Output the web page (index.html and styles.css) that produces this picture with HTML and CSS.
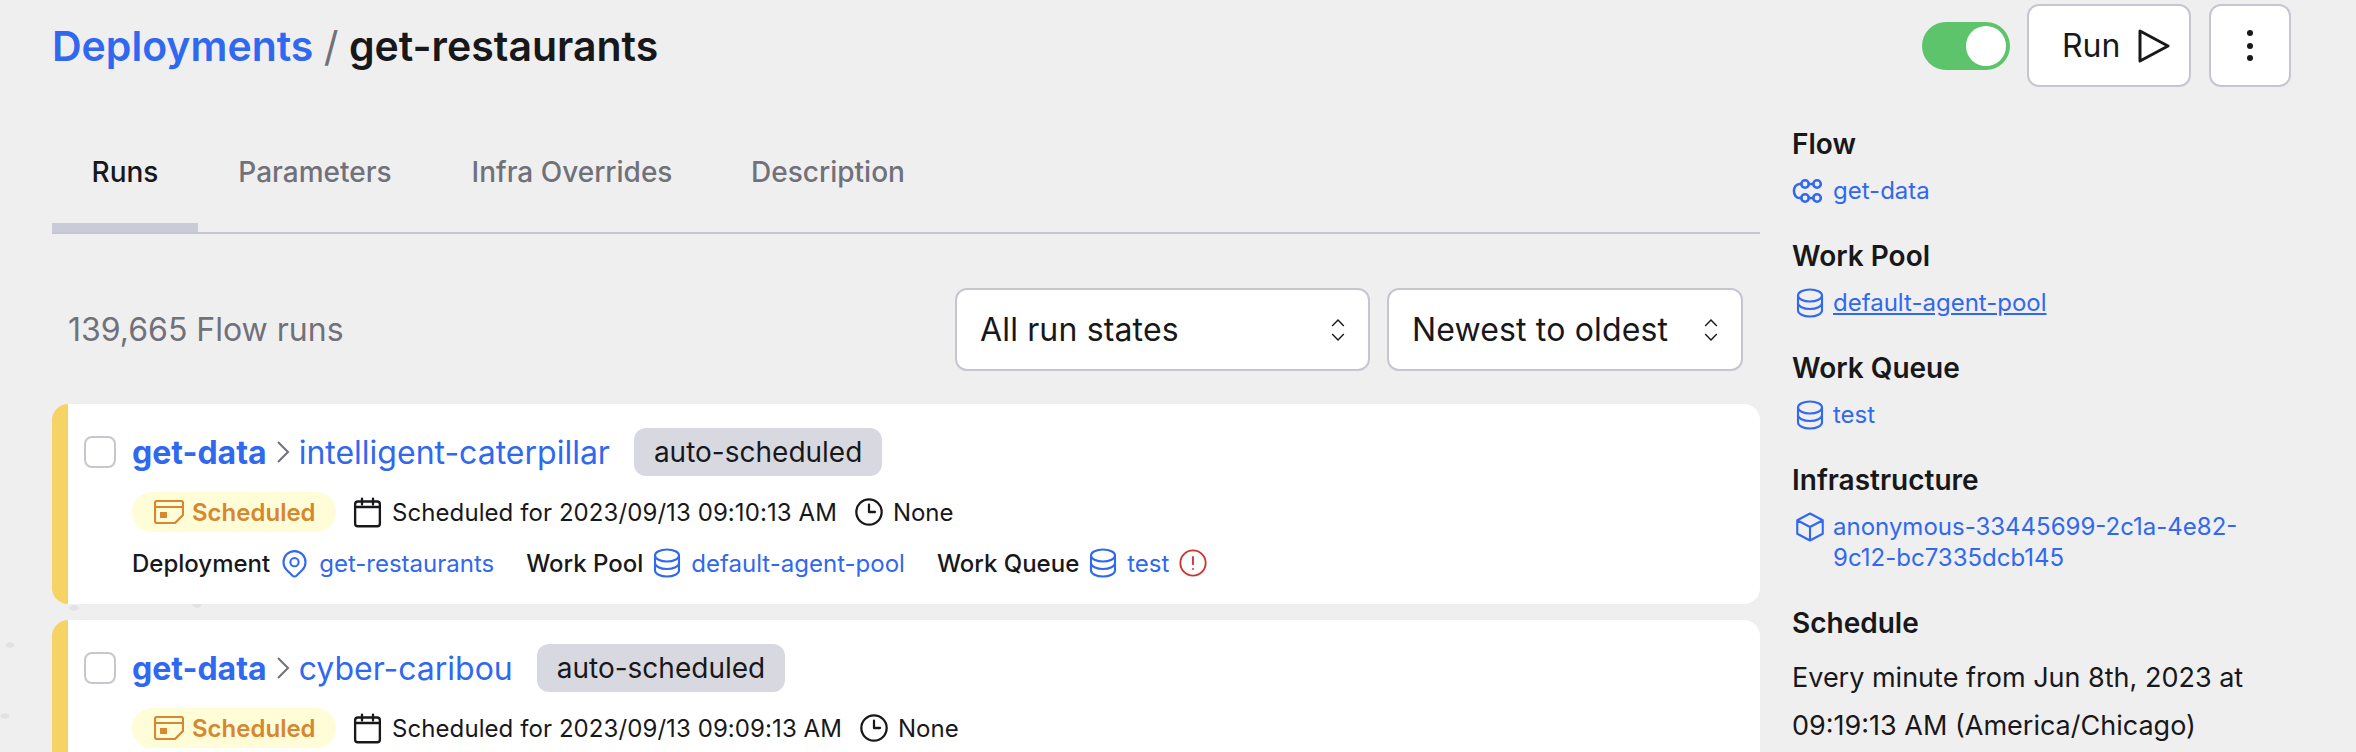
FILE: index.html
```html
<!DOCTYPE html>
<html>
<head>
   <meta charset="utf-8" />
   <title>get-restaurants</title>
   <link rel="stylesheet" href="styles.css">
</head>
<body>
   <svg class="sprite" xmlns="http://www.w3.org/2000/svg">
      <symbol id="i-db" viewBox="0 0 24 24"><path d="M4 7v10c0 2.21 3.582 4 8 4s8-1.79 8-4V7M4 7c0 2.21 3.582 4 8 4s8-1.79 8-4M4 7c0-2.21 3.582-4 8-4s8 1.79 8 4m0 5c0 2.21-3.582 4-8 4s-8-1.79-8-4"/></symbol>
      <symbol id="i-cube" viewBox="0 0 24 24"><path d="M20.500 7.500L12 3 3.500 7.500m17 0L12 12m8.500-4.500v9L12 21m0-9L3.500 7.500M12 12v9M3.500 7.500v9L12 21"/></symbol>
      <symbol id="i-pin" viewBox="0 0 24 24"><path d="M17.657 16.657L13.414 20.9a1.998 1.998 0 01-2.827 0l-4.244-4.243a8 8 0 1111.314 0z"/><path d="M15 11a3 3 0 11-6 0 3 3 0 016 0z"/></symbol>
      <symbol id="i-cal" viewBox="0 0 24 24"><path d="M8 6V2m8 4V2M3 8h18M5 22h14a2 2 0 002-2V6a2 2 0 00-2-2H5a2 2 0 00-2 2v14a2 2 0 002 2z"/></symbol>
      <symbol id="i-clock" viewBox="0 0 24 24"><path d="M12 6.500V12h4.500M21.500 12a9.500 9.500 0 11-19 0 9.500 9.500 0 0119 0z"/></symbol>
      <symbol id="i-alert" viewBox="0 0 24 24"><path d="M12 7.500v5.500m0 3.500h.01M21.500 12a9.500 9.500 0 11-19 0 9.500 9.500 0 0119 0z"/></symbol>
      <symbol id="i-sched" viewBox="0 0 30 24"><path d="M1 3a2 2 0 012-2h24a2 2 0 012 2v12l-8 8H3a2 2 0 01-2-2V3zM1 7h28"/><path class="fill" d="M6 12h7v6H6z"/></symbol>
      <symbol id="i-flow" viewBox="0 0 24 24"><circle cx="8.700" cy="7.300" r="2.500"/><circle cx="16.700" cy="7.300" r="2.500"/><circle cx="8.700" cy="16.700" r="2.500"/><circle cx="16.700" cy="16.700" r="2.500"/><path d="M6.200 7.300H5C2.800 7.300 1.300 9.500 1.300 12s1.500 4.700 3.700 4.700h1.200M11.200 7.300h3M11.200 16.700h3"/></symbol>
   </svg>

   <div class="page">
      <header class="top">
         <h1 class="crumbs"><a href="#">Deployments</a> <span class="slash">/</span> <span class="name">get-restaurants</span></h1>
         <div class="actions">
            <div class="toggle"><span class="knob"></span></div>
            <button class="btn btn-run">Run
               <svg class="play" viewBox="0 0 32 34"><path d="M2 2l28 15-28 15z"/></svg>
            </button>
            <button class="btn btn-more"><span class="dot"></span><span class="dot"></span><span class="dot"></span></button>
         </div>
      </header>

      <div class="columns">
         <main class="main">
            <nav class="tabs">
               <a class="tab active" href="#">Runs</a>
               <a class="tab" href="#">Parameters</a>
               <a class="tab" href="#">Infra Overrides</a>
               <a class="tab" href="#">Description</a>
            </nav>

            <div class="filters">
               <span class="count">139,665 Flow runs</span>
               <div class="select select-state">All run states
                  <svg class="arrows" viewBox="0 0 24 24"><path d="M7 8.500l5-5 5 5m0 7l-5 5-5-5"/></svg>
               </div>
               <div class="select select-sort">Newest to oldest
                  <svg class="arrows" viewBox="0 0 24 24"><path d="M7 8.500l5-5 5 5m0 7l-5 5-5-5"/></svg>
               </div>
            </div>

            <article class="card">
               <div class="row row-title">
                  <span class="check"></span>
                  <a class="flow" href="#">get-data</a>
                  <svg class="chev" viewBox="5 1 14 22"><path d="M7 2l10 10-10 10"/></svg>
                  <a class="run" href="#">intelligent-caterpillar</a>
                  <span class="tag">auto-scheduled</span>
               </div>
               <div class="row row-meta">
                  <span class="badge"><svg class="ic-badge"><use href="#i-sched"/></svg>Scheduled</span>
                  <svg class="ic ic-cal"><use href="#i-cal"/></svg>
                  <span class="when">Scheduled for 2023/09/13 09:10:13 AM</span>
                  <svg class="ic ic-clock"><use href="#i-clock"/></svg>
                  <span>None</span>
               </div>
               <div class="row row-rel">
                  <span class="rel-first">Deployment</span>
                  <svg class="ic ic-pin"><use href="#i-pin"/></svg>
                  <a class="rel-pin" href="#">get-restaurants</a>
                  <span class="rel-label">Work Pool</span>
                  <svg class="ic ic-db"><use href="#i-db"/></svg>
                  <a href="#">default-agent-pool</a>
                  <span class="rel-label">Work Queue</span>
                  <svg class="ic ic-db"><use href="#i-db"/></svg>
                  <a href="#">test</a>
                  <svg class="ic ic-alert"><use href="#i-alert"/></svg>
               </div>
            </article>

            <article class="card">
               <div class="row row-title">
                  <span class="check"></span>
                  <a class="flow" href="#">get-data</a>
                  <svg class="chev" viewBox="5 1 14 22"><path d="M7 2l10 10-10 10"/></svg>
                  <a class="run" href="#">cyber-caribou</a>
                  <span class="tag">auto-scheduled</span>
               </div>
               <div class="row row-meta">
                  <span class="badge"><svg class="ic-badge"><use href="#i-sched"/></svg>Scheduled</span>
                  <svg class="ic ic-cal"><use href="#i-cal"/></svg>
                  <span class="when">Scheduled for 2023/09/13 09:09:13 AM</span>
                  <svg class="ic ic-clock"><use href="#i-clock"/></svg>
                  <span>None</span>
               </div>
            </article>
         </main>

         <aside class="side">
            <section class="item">
               <h3>Flow</h3>
               <a class="link" href="#"><svg class="ic"><use href="#i-flow"/></svg><span>get-data</span></a>
            </section>
            <section class="item">
               <h3>Work Pool</h3>
               <a class="link under" href="#"><svg class="ic ic-db"><use href="#i-db"/></svg><span>default-agent-pool</span></a>
            </section>
            <section class="item">
               <h3>Work Queue</h3>
               <a class="link" href="#"><svg class="ic ic-db"><use href="#i-db"/></svg><span>test</span></a>
            </section>
            <section class="item">
               <h3>Infrastructure</h3>
               <a class="link" href="#"><svg class="ic ic-db"><use href="#i-cube"/></svg><span>anonymous-33445699-2c1a-4e82-9c12-bc7335dcb145</span></a>
            </section>
            <section class="item">
               <h3>Schedule</h3>
               <p class="sched">Every minute from Jun 8th, 2023 at 09:19:13 AM (America/Chicago)</p>
            </section>
         </aside>
      </div>
   </div>
</body>
</html>
```

FILE: styles.css
```css
* { box-sizing: border-box; }

html, body { margin: 0; height: 100%; overflow: hidden; }

/* faint specks in the page background */
body {
   background:
      radial-gradient(ellipse 5px 3px at 10px 645px, #e2e2e2 80%, transparent) no-repeat,
      radial-gradient(ellipse 5px 3px at 5px 716px, #e2e2e2 80%, transparent) no-repeat,
      radial-gradient(ellipse 5px 3px at 74px 608px, #e2e2e2 80%, transparent) no-repeat,
      radial-gradient(ellipse 5px 3px at 197px 605px, #e2e2e2 80%, transparent) no-repeat,
      #efefef;
   color: #18181b;
   font-family: Inter, "Liberation Sans", sans-serif;
   font-size: 24px;
}

a { color: #3068ef; text-decoration: none; }

.sprite { display: none; }

.page { padding: 4px 65px 0 52px; }

/* header */
.top { display: flex; justify-content: space-between; align-items: center; height: 83px; }

.crumbs { margin: 0; font-size: 41px; font-weight: 600; }

.slash { color: #71717a; font-weight: 400; }

.actions { display: flex; align-items: center; }

.toggle { width: 88px; height: 48px; margin-right: 17px; padding: 4px; border-radius: 24px; background: #5ec46b; display: flex; justify-content: flex-end; }

.knob { width: 40px; height: 40px; border-radius: 50%; background: #fff; }

.btn { height: 83px; background: #fff; border: 2px solid #c6c6d2; border-radius: 12px; display: flex; align-items: center; color: #18181b; font-family: inherit; }

.btn-run { width: 164px; margin-right: 18px; padding: 0 0 0 33px; font-size: 32px; gap: 18px; }

.play { width: 32px; height: 34px; flex: none; fill: none; stroke: #18181b; stroke-width: 3; stroke-linejoin: round; }

.btn-more { width: 82px; flex-direction: column; justify-content: center; gap: 6.5px; }

.dot { width: 6px; height: 6px; border-radius: 50%; background: #18181b; }

/* columns */
.columns { display: flex; gap: 32px; }

.main { width: 1708px; flex: none; }

.side { flex: 1; padding-top: 40px; }

/* tabs */
.tabs { display: flex; margin-top: 25px; height: 122px; border-bottom: 2px solid #c6c6d2; }

.tab { width: 146px; padding-top: 43px; color: #71717a; font-size: 28px; font-weight: 500; text-align: center; white-space: nowrap; }

.tab:nth-child(2) { width: 234px; }

.tab:nth-child(3) { width: 280px; }

.tab:nth-child(4) { width: 232px; }

.tab.active { color: #18181b; height: 120px; border-bottom: 9px solid #c9cbd6; }

/* filters */
.filters { display: flex; align-items: center; margin-top: 54px; padding: 0 17px 0 16px; }

.count { flex: 1; font-size: 32px; color: #71717a; }

.select { height: 83px; background: #fff; border: 2px solid #c6c6d2; border-radius: 12px; display: flex; align-items: center; justify-content: space-between; font-size: 32px; letter-spacing: 0.15px; padding: 0 16px 0 23px; }

.select-state { width: 415px; }

.select-sort { width: 356px; margin-left: 17px; }

.arrows { width: 28px; height: 28px; fill: none; stroke: #18181b; stroke-width: 1.200; flex: none; }

/* run cards */
.card { margin-top: 33px; height: 200px; padding: 24px 0 0 16px; background: #fff; border-left: 16px solid #f6d365; border-radius: 16px; }

.card + .card { margin-top: 16px; }

.row { display: flex; align-items: center; }

.row-title { height: 48px; }

.check { width: 32px; height: 32px; margin-right: 16px; border: 2px solid #c6c6d2; border-radius: 8px; }

.flow { font-size: 32px; font-weight: 700; }

.chev { width: 16px; height: 22px; margin: 0 8px; fill: none; stroke: #71717a; stroke-width: 2; }

.run { font-size: 32px; }

.tag { margin-left: 24px; height: 48px; padding: 0 20px; display: flex; align-items: center; background: #d8d9e0; border-radius: 12px; font-size: 28px; }

.row-meta { margin: 16px 0 0 48px; height: 40px; }

.badge { display: flex; align-items: center; gap: 8px; width: 204px; height: 40px; padding-left: 22px; margin-right: 15px; background: #fefdd8; border-radius: 20px; color: #d6872f; font-size: 24px; font-weight: 600; }

.ic-badge { width: 30px; height: 24px; flex: none; fill: none; stroke: #d6872f; stroke-width: 2.200; stroke-linejoin: round; }

.fill { fill: #d6872f; stroke: none; }

/* base icon: the 24 unit grid drawn at 1.5x */
.ic { width: 36px; height: 36px; flex: none; fill: none; stroke: currentColor; stroke-width: 1.700; stroke-linecap: round; stroke-linejoin: round; }

.ic-cal { width: 33px; height: 33px; }

.when { margin: 0 16px 0 8px; letter-spacing: 0.08px; }

.ic-clock { width: 32px; height: 32px; margin-right: 8px; }

.row-rel { margin: 15px 0 0 48px; height: 32px; font-weight: 500; }

.row-rel a { margin-left: 6px; font-weight: 400; }

.rel-first { margin-right: 8px; }

.ic-pin { width: 33px; height: 33px; color: #3068ef; stroke-width: 1.500; }

.row-rel a.rel-pin { margin-left: 8px; }

.rel-label { margin-left: 32px; margin-right: 6px; }

.ic-db { color: #3068ef; stroke-width: 1.400; }

.ic-alert { width: 32px; height: 32px; margin-left: 8px; color: #c9372c; stroke-width: 1.400; }

/* sidebar */
.item { margin-bottom: 33px; }

.item h3 { margin: 0 0 14px; font-size: 28px; line-height: 34px; font-weight: 600; }

.link { display: flex; gap: 5px; font-size: 24px; line-height: 31px; }

.link .ic { margin: -2px 0 -3px; }

.under span { text-decoration: underline; }

.sched { margin: 2px 0 0; font-size: 27px; line-height: 48px; }
```
